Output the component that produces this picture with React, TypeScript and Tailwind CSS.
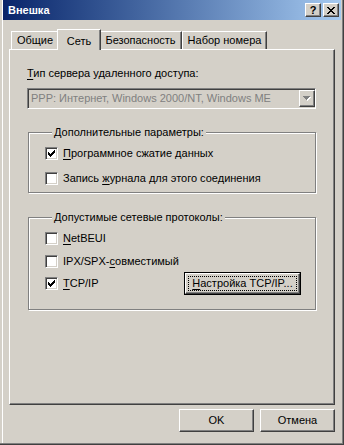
import React from "react";

// classic 3d edges
const raised =
  "border border-t-white border-l-white border-r-[#404040] border-b-[#404040] shadow-[inset_-1px_-1px_#808080]";
const sunken =
  "border border-t-[#808080] border-l-[#808080] border-r-white border-b-white shadow-[inset_1px_1px_#404040,inset_-1px_-1px_#d4d0c8]";

function Pixels({ rows, color }: { rows: string[]; color: string }) {
  const w = rows[0].length;
  const h = rows.length;
  const d = rows
    .flatMap((r, y) => [...r].map((c, x) => (c === "X" ? `M${x} ${y}h1v1h-1z` : "")))
    .join("");
  return (
    <svg width={w} height={h} viewBox={`0 0 ${w} ${h}`} shapeRendering="crispEdges">
      <path d={d} fill={color} />
    </svg>
  );
}

const closeGlyph = [
  "XX....XX",
  ".XX..XX.",
  "..XXXX..",
  "...XX...",
  "..XXXX..",
  ".XX..XX.",
  "XX....XX",
];

const checkGlyph = [
  "......X",
  ".....XX",
  "X...XXX",
  "XX.XXX.",
  "XXXXX..",
  ".XXX...",
  "..X....",
];

function Checkbox({ checked, children }: { checked?: boolean; children: React.ReactNode }) {
  return (
    <div className="flex items-center gap-[5px] h-[13px]">
      <span className={`w-[13px] h-[13px] shrink-0 bg-white flex items-center justify-center ${sunken}`}>
        {checked && <Pixels rows={checkGlyph} color="#000" />}
      </span>
      <span className="leading-[13px] whitespace-nowrap">{children}</span>
    </div>
  );
}

function Group({ title, className, children }: { title: string; className?: string; children: React.ReactNode }) {
  return (
    <fieldset
      className={`ml-[1px] w-[288px] border border-[#808080] shadow-[1px_1px_#fff,inset_1px_1px_#fff] pl-[16px] pr-[14px] ${className ?? ""}`}
    >
      <legend className="ml-[7px] px-[2px] leading-[13px] bg-[#d4d0c8]">{title}</legend>
      {children}
    </fieldset>
  );
}

function Tab({ label, active, w }: { label: string; active?: boolean; w: string }) {
  if (active)
    return (
      <div
        className={`${w} h-[21px] -mx-[2px] relative z-10 bg-[#d4d0c8] border-t border-l border-r border-t-white border-l-white border-r-[#404040] shadow-[inset_-1px_0_#808080] flex items-start justify-center pt-[3px]`}
      >
        {label}
      </div>
    );
  return (
    <div
      className={`${w} h-[18px] mb-px bg-[#d4d0c8] border-t border-l border-r border-t-white border-l-white border-r-[#404040] shadow-[inset_-1px_0_#808080] flex items-center justify-center`}
    >
      {label}
    </div>
  );
}

function Btn({ children }: { children: React.ReactNode }) {
  return <div className={`w-[75px] h-[23px] flex items-center justify-center ${raised}`}>{children}</div>;
}

export default function App() {
  return (
    <div className="w-[344px] h-[445px] bg-[#d4d0c8] shadow-[inset_-1px_-1px_#404040,inset_-2px_-2px_#808080,inset_2px_0_#d4d0c8,inset_3px_0_#fff] flex flex-col font-['Tahoma','Liberation_Sans',sans-serif] text-[11px] text-black overflow-hidden select-none">
      {/* title bar */}
      <div className="mx-[3px] h-[20px] shrink-0 flex items-center bg-linear-to-r from-[#0a246a] to-[#a6caf0] pl-[5px] pr-[2px]">
        <span className="flex-1 text-white font-bold leading-none">Внешка</span>
        <div className="flex gap-[2px]">
          <div className={`w-[16px] h-[14px] bg-[#d4d0c8] flex items-center justify-center font-bold text-[11px] leading-none ${raised}`}>
            ?
          </div>
          <div className={`w-[16px] h-[14px] bg-[#d4d0c8] flex items-center justify-center ${raised}`}>
            <Pixels rows={closeGlyph} color="#000" />
          </div>
        </div>
      </div>

      {/* tabs */}
      <div className="ml-[11px] mt-[9px] flex items-end -mb-px relative z-10">
        <Tab label="Общие" w="w-[48px]" />
        <Tab label="Сеть" w="w-[44px]" active />
        <Tab label="Безопасность" w="w-[83px]" />
        <Tab label="Набор номера" w="w-[85px]" />
      </div>

      {/* panel */}
      <div className={`ml-[9px] w-[326px] h-[356px] shrink-0 flex flex-col pl-[17px] ${raised}`}>
        <div className="mt-[17px] leading-[13px]">
          <span className="underline underline-offset-2">Т</span>ип сервера удаленного доступа:
        </div>
        <div className={`mt-[8px] w-[289px] h-[21px] flex items-center bg-[#d4d0c8] ${sunken}`}>
          <span className="flex-1 pl-[3px] text-[#808080] whitespace-nowrap overflow-hidden">
            PPP: Интернет, Windows 2000/NT, Windows ME
          </span>
          <span className={`w-[16px] h-[17px] flex items-center justify-center ${raised}`}>
            <svg width="8" height="5" viewBox="0 0 8 5" shapeRendering="crispEdges">
              <path d="M1 1h7v1h-1v1h-1v1h-1v1h-1v-1h-1v-1h-1v-1h-1z" fill="#fff" />
              <path d="M0 0h7v1h-1v1h-1v1h-1v1h-1v-1h-1v-1h-1v-1h-1z" fill="#808080" />
            </svg>
          </span>
        </div>

        <Group title="Дополнительные параметры:" className="mt-[17px] pb-[7px]">
          <div className="mt-[8px]">
            <Checkbox checked>
              <span className="underline underline-offset-2">П</span>рограммное сжатие данных
            </Checkbox>
          </div>
          <div className="mt-[12px]">
            <Checkbox>
              Запись <span className="underline underline-offset-2">ж</span>урнала для этого соединения
            </Checkbox>
          </div>
        </Group>

        <Group title="Допустимые сетевые протоколы:" className="mt-[18px] pb-[14px]">
          <div className="mt-[8px]">
            <Checkbox>
              <span className="underline underline-offset-2">N</span>etBEUI
            </Checkbox>
          </div>
          <div className="mt-[10px]">
            <Checkbox>
              IPX/SPX-<span className="underline underline-offset-2">с</span>овместимый
            </Checkbox>
          </div>
          <div className="mt-[4px] h-[23px] flex items-center">
            <Checkbox checked>
              <span className="underline underline-offset-2">T</span>CP/IP
            </Checkbox>
            <div className="ml-auto w-[117px] h-[23px] border border-black">
              <div className={`w-full h-full p-[2px] ${raised}`}>
                <div className="w-full h-full border border-dotted border-black flex items-center justify-center leading-none">
                  <span>
                    <span className="underline underline-offset-2">Н</span>астройка TCP/IP...
                  </span>
                </div>
              </div>
            </div>
          </div>
        </Group>
      </div>

      {/* dialog buttons */}
      <div className="ml-[9px] w-[326px] mt-[4px] flex justify-end gap-[6px]">
        <Btn>OK</Btn>
        <Btn>Отмена</Btn>
      </div>
    </div>
  );
}
